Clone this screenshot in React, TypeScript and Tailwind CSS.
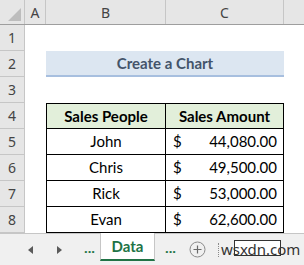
import { Fragment } from 'react';

const rows = [
  { name: 'John', amount: '44,080.00' },
  { name: 'Chris', amount: '49,500.00' },
  { name: 'Rick', amount: '53,000.00' },
  { name: 'Evan', amount: '62,600.00' },
];

const cellFont = { fontFamily: 'Lato, "Open Sans", sans-serif' };
const uiFont = { fontFamily: '"Noto Sans", "Open Sans", sans-serif' };

function RowHead({ n }: { n: number }) {
  return (
    <div
      className="w-[25px] h-[26px] shrink-0 flex items-center justify-center bg-[#e6e6e6] border-r border-b border-[#c6c6c6] text-[14px] text-[#444]"
      style={uiFont}
    >
      {n}
    </div>
  );
}

export default function App() {
  return (
    <div className="w-[304px] h-[265px] overflow-hidden bg-white flex flex-col" style={cellFont}>
      {/* column headers */}
      <div className="flex h-[25px] bg-[#e6e6e6] border-b border-[#9e9e9e] text-[14px] text-[#444]" style={uiFont}>
        <div className="w-[25px] shrink-0 border-r border-[#c6c6c6] flex items-end justify-end p-[3px]">
          <div className="w-0 h-0 border-l-[13px] border-l-transparent border-b-[13px] border-b-[#bdbdbd]" />
        </div>
        <div className="w-[21px] shrink-0 border-r border-[#c6c6c6] flex items-center justify-center">A</div>
        <div className="w-[120px] shrink-0 border-r border-[#c6c6c6] flex items-center justify-center">B</div>
        <div className="w-[118px] shrink-0 border-r border-[#c6c6c6] flex items-center justify-center">C</div>
        <div className="flex-1" />
      </div>

      {/* row 1 */}
      <div className="flex">
        <RowHead n={1} />
      </div>

      {/* row 2: title */}
      <div className="flex">
        <RowHead n={2} />
        <div className="w-[21px] shrink-0" />
        <div className="w-[238px] h-[26px] shrink-0 bg-[#dce6f1] border-b-2 border-[#a7bfdf] flex items-center justify-center text-[15px] font-bold text-[#44546a]">
          Create a Chart
        </div>
      </div>

      {/* row 3 */}
      <div className="flex">
        <RowHead n={3} />
      </div>

      {/* row 4: table header */}
      <div className="flex">
        <RowHead n={4} />
        <div className="w-[21px] shrink-0" />
        <div className="w-[120px] h-[26px] shrink-0 bg-[#e2efda] border border-black flex items-center justify-center text-[15px] font-bold text-black">
          Sales People
        </div>
        <div className="w-[118px] h-[26px] shrink-0 bg-[#e2efda] border-y border-r border-black flex items-center justify-center text-[15px] font-bold text-black">
          Sales Amount
        </div>
      </div>

      {rows.map((r, i) => (
        <Fragment key={r.name}>
          <div className="flex">
            <RowHead n={i + 5} />
            <div className="w-[21px] shrink-0" />
            <div className="w-[120px] h-[26px] shrink-0 border-x border-b border-black flex items-center justify-center text-[15px] text-black">
              {r.name}
            </div>
            <div className="w-[118px] h-[26px] shrink-0 border-r border-b border-black flex items-center justify-between pl-[7px] pr-[6px] text-[15px] text-black">
              <span>$</span>
              <span>{r.amount}</span>
            </div>
          </div>
        </Fragment>
      ))}

      {/* sheet tab bar */}
      <div className="flex-1 flex bg-[#f0f0f0] border-t border-[#c6c6c6] relative" style={uiFont}>
        <div className="w-[100px] shrink-0 flex items-center">
          <div className="ml-[28px] w-0 h-0 border-y-[4px] border-y-transparent border-r-[5px] border-r-[#5a5a5a]" />
          <div className="ml-[24px] w-0 h-0 border-y-[4px] border-y-transparent border-l-[5px] border-l-[#5a5a5a]" />
          <div className="ml-[22px] text-[13px] font-bold text-[#217346] leading-none pb-[2px]">...</div>
        </div>
        <div className="w-[55px] h-[28px] -mt-px shrink-0 bg-white border-l border-r border-[#c6c6c6] border-b-2 border-b-[#217346] flex items-center justify-center text-[15px] font-bold text-[#217346]" style={cellFont}>
          Data
        </div>
        <div className="flex items-center">
          <div className="ml-[10px] text-[13px] font-bold text-[#217346] leading-none pb-[2px]">...</div>
          <svg className="ml-[13px]" width="17" height="17" viewBox="0 0 17 17">
            <circle cx="8.5" cy="8.5" r="7.5" fill="none" stroke="#8a8a8a" strokeWidth="1" />
            <path d="M8.5 4.5v8M4.5 8.5h8" stroke="#6a6a6a" strokeWidth="1.2" />
          </svg>
          <div className="ml-[12px] h-[14px] border-l border-dotted border-[#8a8a8a]" />
          <div className="relative ml-[2px] text-[15px] text-[#333] leading-none">
            <div className="absolute left-[13px] -top-[2px] w-[47px] h-[16px] bg-white border border-[#333]" />
            <span className="relative">wsxdn.com</span>
          </div>
        </div>
      </div>
    </div>
  );
}
